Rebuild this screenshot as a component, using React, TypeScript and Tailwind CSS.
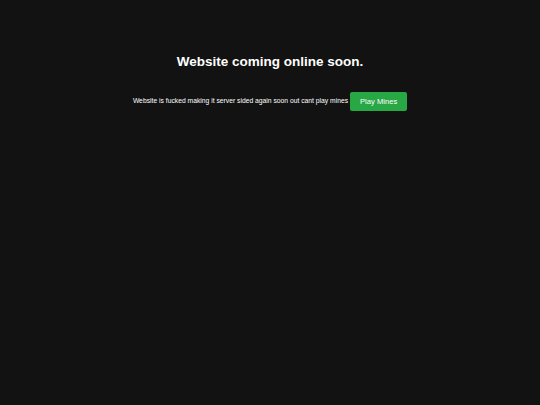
import React from 'react';

const App: React.FC = () => {
  return (
    <div className="min-h-screen w-full bg-[#121212] text-white font-['Liberation_Sans',Arial,sans-serif]">
      <div className="flex flex-col items-center pt-[52px]">
        <h1 className="text-[13.5px] font-bold leading-[20px]">Website coming online soon.</h1>
        <div className="mt-[20px] flex items-center gap-[2px]">
          <p className="text-[6.75px] leading-none">
            Website is fucked making it server sided again soon out cant play mines
          </p>
          <button className="h-[19px] w-[57px] rounded-[2px] bg-[#28a745] text-[7.6px] text-white">
            Play Mines
          </button>
        </div>
      </div>
    </div>
  );
};

export default App;
